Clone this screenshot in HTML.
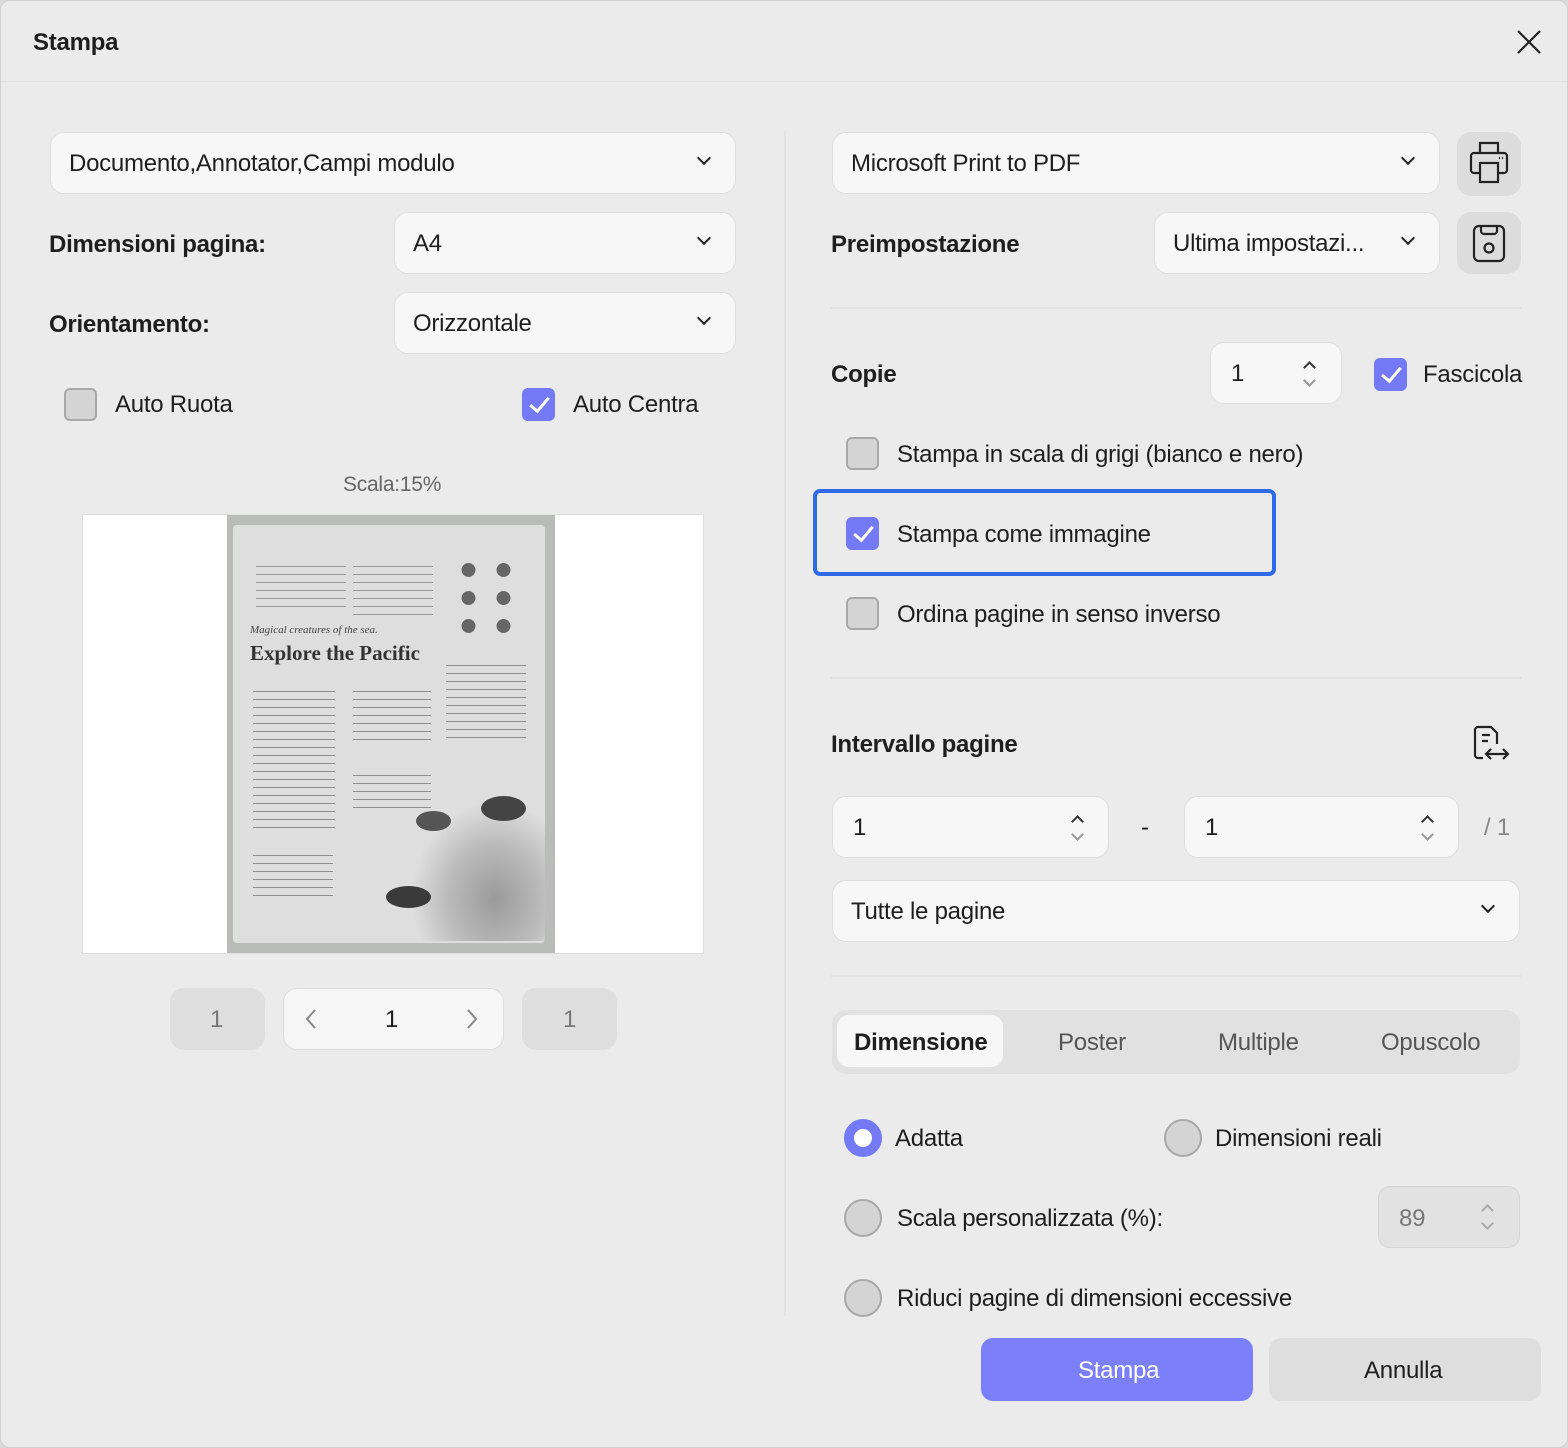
<!DOCTYPE html>
<html><head><meta charset="utf-8">
<style>
*{box-sizing:border-box;margin:0;padding:0}
body{width:1568px;height:1448px;background:#d9d9d9;font-family:"Liberation Sans",sans-serif;color:#1e1e1e;position:relative;overflow:hidden}
.dlg{position:absolute;left:0;top:0;width:1568px;height:1448px;background:#ebebeb;border:1px solid #d0d0d0;border-radius:10px;overflow:hidden}
.a{position:absolute}
.t{position:absolute;font-size:24px;line-height:30px;white-space:nowrap;letter-spacing:-0.25px}
.b{font-weight:bold}
.dd{position:absolute;background:#f7f7f7;border:1.5px solid #dedede;border-radius:14px}
.dd .t{left:18px;top:16px}
.chev{position:absolute;width:10px;height:10px;border-right:2px solid #222;border-bottom:2px solid #222;transform:rotate(45deg)}
.cb{position:absolute;width:33px;height:33px;border-radius:6px;background:#d4d4d4;border:2px solid #a8a8a8}
.cb.on{background:#7479f5;border-color:#7479f5}
.cb.on:after{content:"";position:absolute;left:10px;top:3px;width:8px;height:16px;border-right:3px solid #fff;border-bottom:3px solid #fff;transform:rotate(40deg)}
.rd{position:absolute;width:38px;height:38px;border-radius:50%;background:#d4d4d4;border:2px solid #a8a8a8}
.rd.on{background:#fff;border:10px solid #7479f5}
.hr{position:absolute;height:2px;background:#e0e0e0}
.ib{position:absolute;background:#dcdcdc;border-radius:14px}
.up,.dn{position:absolute;width:9px;height:9px;border-left:2px solid #333;border-top:2px solid #333;transform:rotate(45deg)}
.dn{transform:rotate(225deg);border-color:#999}
</style></head><body>
<div class="dlg">
<div class="t b" style="left:32px;top:27px">Stampa</div>
<svg class="a" style="left:1514px;top:27px" width="28" height="28"><path d="M3 3L25 25M25 3L3 25" stroke="#222" stroke-width="2.2"/></svg>
<div class="hr" style="left:0;top:80px;width:1568px;height:1px"></div>

<div class="dd" style="left:49px;top:131px;width:686px;height:62px"><div class="t">Documento,Annotator,Campi modulo</div><div class="chev" style="left:648px;top:20px"></div></div>
<div class="t b" style="left:48px;top:229px">Dimensioni pagina:</div>
<div class="dd" style="left:393px;top:211px;width:342px;height:62px"><div class="t">A4</div><div class="chev" style="left:304px;top:20px"></div></div>
<div class="t b" style="left:48px;top:309px">Orientamento:</div>
<div class="dd" style="left:393px;top:291px;width:342px;height:62px"><div class="t">Orizzontale</div><div class="chev" style="left:304px;top:20px"></div></div>
<div class="cb" style="left:63px;top:387px"></div><div class="t" style="left:114px;top:389px">Auto Ruota</div>
<div class="cb on" style="left:521px;top:387px"></div><div class="t" style="left:572px;top:389px">Auto Centra</div>
<div class="t" style="left:342px;top:469px;font-size:21px;color:#666">Scala:15%</div>

<div class="a" style="left:81px;top:513px;width:622px;height:440px;background:#fff;border:1px solid #ddd"></div>
<div class="a" style="left:226px;top:514px;width:328px;height:438px;background:#b9bcb8"></div>
<div class="a" style="left:232px;top:524px;width:312px;height:418px;background:#dedede;border-radius:4px"></div>
<div class="a" style="left:255px;top:560px;width:90px;height:50px;background:repeating-linear-gradient(#dedede 0 5px,#9a9a9a 5px 6px,#dedede 6px 8px)"></div>
<div class="a" style="left:352px;top:560px;width:80px;height:55px;background:repeating-linear-gradient(#dedede 0 5px,#9a9a9a 5px 6px,#dedede 6px 8px)"></div>
<div class="a" style="left:450px;top:555px;width:70px;height:85px;background:radial-gradient(circle,#666 30%,transparent 32%) 0 0/35px 28px"></div>
<div class="a" style="left:249px;top:623px;font-family:'Liberation Serif',serif;font-style:italic;font-size:11px;color:#444">Magical creatures of the sea.</div>
<div class="a" style="left:249px;top:640px;font-family:'Liberation Serif',serif;font-weight:bold;font-size:21px;color:#333">Explore the Pacific</div>
<div class="a" style="left:252px;top:684px;width:82px;height:150px;background:repeating-linear-gradient(#dedede 0 6px,#8f8f8f 6px 7px,#dedede 7px 8px)"></div>
<div class="a" style="left:252px;top:848px;width:80px;height:50px;background:repeating-linear-gradient(#dedede 0 6px,#8f8f8f 6px 7px,#dedede 7px 8px)"></div>
<div class="a" style="left:352px;top:684px;width:78px;height:60px;background:repeating-linear-gradient(#dedede 0 6px,#8f8f8f 6px 7px,#dedede 7px 8px)"></div>
<div class="a" style="left:352px;top:768px;width:78px;height:40px;background:repeating-linear-gradient(#dedede 0 6px,#8f8f8f 6px 7px,#dedede 7px 8px)"></div>
<div class="a" style="left:445px;top:658px;width:80px;height:80px;background:repeating-linear-gradient(#dedede 0 6px,#8f8f8f 6px 7px,#dedede 7px 8px)"></div>
<div class="a" style="left:410px;top:800px;width:140px;height:140px;background:radial-gradient(ellipse at 60% 70%,#9a9a9a,#bbb 40%,transparent 70%)"></div>
<div class="a" style="left:480px;top:795px;width:45px;height:25px;border-radius:50%;background:#444"></div>
<div class="a" style="left:385px;top:885px;width:45px;height:22px;border-radius:50%;background:#3a3a3a"></div>
<div class="a" style="left:415px;top:810px;width:35px;height:20px;border-radius:50%;background:#555"></div>

<div class="a" style="left:169px;top:987px;width:95px;height:62px;background:#dedede;border-radius:14px"></div><div class="t" style="left:209px;top:1004px;color:#777">1</div>
<div class="a" style="left:282px;top:987px;width:221px;height:62px;background:#f6f6f6;border:1.5px solid #dcdcdc;border-radius:14px"></div>
<svg class="a" style="left:303px;top:1007px" width="14" height="22"><path d="M11 2L3 11L11 20" stroke="#888" stroke-width="2" fill="none"/></svg>
<div class="t" style="left:384px;top:1004px">1</div>
<svg class="a" style="left:464px;top:1007px" width="14" height="22"><path d="M3 2L11 11L3 20" stroke="#888" stroke-width="2" fill="none"/></svg>
<div class="a" style="left:521px;top:987px;width:95px;height:62px;background:#dedede;border-radius:14px"></div><div class="t" style="left:562px;top:1004px;color:#777">1</div>

<div class="a" style="left:783px;top:130px;width:2px;height:1185px;background:#e2e2e2"></div>

<div class="dd" style="left:831px;top:131px;width:608px;height:62px"><div class="t">Microsoft Print to PDF</div><div class="chev" style="left:570px;top:20px"></div></div>
<div class="ib" style="left:1456px;top:131px;width:64px;height:64px"></div>
<svg class="a" style="left:1466px;top:139px" width="44" height="46" fill="none" stroke="#222" stroke-width="2.2"><path d="M13 13V3H31V13"/><path d="M13 33H7A3 3 0 0 1 4 30V16A3 3 0 0 1 7 13H37A3 3 0 0 1 40 16V30A3 3 0 0 1 37 33H31"/><rect x="13" y="23" width="18" height="19"/><path d="M32 18h1M35 18h1"/></svg>
<div class="t b" style="left:830px;top:229px">Preimpostazione</div>
<div class="dd" style="left:1153px;top:211px;width:286px;height:62px"><div class="t">Ultima impostazi...</div><div class="chev" style="left:248px;top:20px"></div></div>
<div class="ib" style="left:1456px;top:211px;width:64px;height:62px"></div>
<svg class="a" style="left:1470px;top:222px" width="36" height="42" fill="none" stroke="#222" stroke-width="2.2"><rect x="3" y="3" width="30" height="35" rx="5"/><path d="M10 3V8A3 3 0 0 0 13 11H23A3 3 0 0 0 26 8V3"/><circle cx="18" cy="25" r="4.5"/></svg>
<div class="hr" style="left:830px;top:306px;width:690px"></div>

<div class="t b" style="left:830px;top:359px">Copie</div>
<div class="dd" style="left:1209px;top:341px;width:132px;height:62px"><div class="t" style="left:20px">1</div><div class="up" style="left:94px;top:20px"></div><div class="dn" style="left:94px;top:33px"></div></div>
<div class="cb on" style="left:1373px;top:357px"></div><div class="t" style="left:1422px;top:359px">Fascicola</div>
<div class="cb" style="left:845px;top:436px"></div><div class="t" style="left:896px;top:439px">Stampa in scala di grigi (bianco e nero)</div>
<div class="a" style="left:812px;top:488px;width:463px;height:87px;border:4px solid #2f6be8;border-radius:7px"></div>
<div class="cb on" style="left:845px;top:516px"></div><div class="t" style="left:896px;top:519px">Stampa come immagine</div>
<div class="cb" style="left:845px;top:596px"></div><div class="t" style="left:896px;top:599px">Ordina pagine in senso inverso</div>
<div class="hr" style="left:830px;top:676px;width:690px"></div>

<div class="t b" style="left:830px;top:729px">Intervallo pagine</div>
<svg class="a" style="left:1470px;top:723px" width="40" height="40" fill="none" stroke="#222" stroke-width="2.2"><path d="M12 34H7A3 3 0 0 1 4 31V6A3 3 0 0 1 7 3H20L26 9V20"/><path d="M11 11H19M11 17H17"/><path d="M15 30H37M20 25L15 30L20 35M32 25L37 30L32 35"/></svg>
<div class="dd" style="left:831px;top:795px;width:277px;height:62px"><div class="t" style="left:20px">1</div><div class="up" style="left:240px;top:20px"></div><div class="dn" style="left:240px;top:33px"></div></div>
<div class="t" style="left:1140px;top:812px">-</div>
<div class="dd" style="left:1183px;top:795px;width:275px;height:62px"><div class="t" style="left:20px">1</div><div class="up" style="left:238px;top:20px"></div><div class="dn" style="left:238px;top:33px"></div></div>
<div class="t" style="left:1483px;top:812px;color:#888">/ 1</div>
<div class="dd" style="left:831px;top:879px;width:688px;height:62px"><div class="t">Tutte le pagine</div><div class="chev" style="left:650px;top:20px"></div></div>
<div class="hr" style="left:830px;top:974px;width:690px"></div>

<div class="a" style="left:831px;top:1009px;width:688px;height:64px;background:#e1e1e1;border-radius:14px"></div>
<div class="a" style="left:836px;top:1014px;width:166px;height:52px;background:#f7f7f7;border-radius:12px"></div>
<div class="t b" style="left:853px;top:1027px">Dimensione</div>
<div class="t" style="left:1057px;top:1027px;color:#555">Poster</div>
<div class="t" style="left:1217px;top:1027px;color:#555">Multiple</div>
<div class="t" style="left:1380px;top:1027px;color:#555">Opuscolo</div>

<div class="rd on" style="left:843px;top:1118px"></div><div class="t" style="left:894px;top:1123px">Adatta</div>
<div class="rd" style="left:1163px;top:1118px"></div><div class="t" style="left:1214px;top:1123px">Dimensioni reali</div>
<div class="rd" style="left:843px;top:1198px"></div><div class="t" style="left:896px;top:1203px">Scala personalizzata (%):</div>
<div class="a" style="left:1377px;top:1185px;width:142px;height:62px;background:#e2e2e2;border:1.5px solid #d4d4d4;border-radius:12px"></div>
<div class="t" style="left:1398px;top:1203px;color:#777">89</div>
<div class="up" style="left:1482px;top:1205px;border-color:#aaa"></div><div class="dn" style="left:1482px;top:1218px;border-color:#aaa"></div>
<div class="rd" style="left:843px;top:1278px"></div><div class="t" style="left:896px;top:1283px">Riduci pagine di dimensioni eccessive</div>

<div class="a" style="left:980px;top:1337px;width:272px;height:63px;background:#7b80f8;border-radius:12px"></div>
<div class="t" style="left:1077px;top:1355px;color:#fff">Stampa</div>
<div class="a" style="left:1268px;top:1337px;width:272px;height:63px;background:#dedede;border-radius:12px"></div>
<div class="t" style="left:1363px;top:1355px">Annulla</div>
</div>
</body></html>
